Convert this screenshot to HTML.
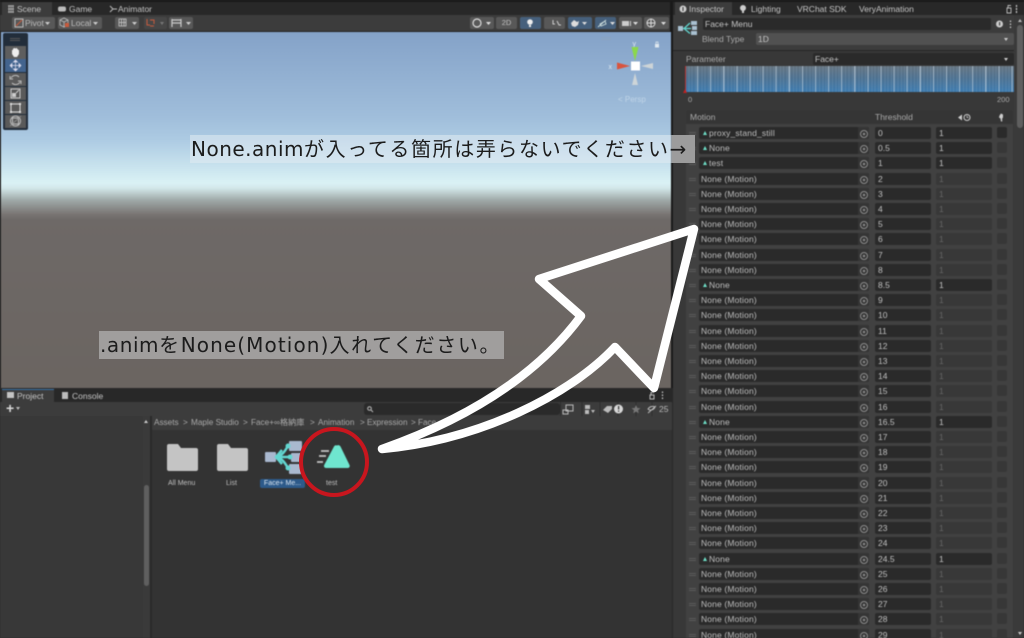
<!DOCTYPE html>
<html lang="ja"><head><meta charset="utf-8"><title>Unity</title>
<style>
*{box-sizing:border-box}
html,body{margin:0;padding:0;width:1024px;height:638px;overflow:hidden;background:#282828}
body{position:relative;font-family:"Liberation Sans","Noto Sans CJK JP",sans-serif;font-size:8.5px;color:#c4c4c4}
#ui{position:absolute;left:0;top:0;width:1024px;height:638px;filter:blur(.45px)}
.a{position:absolute;white-space:nowrap}
.btn{position:absolute;background:#585858;border-radius:2px;height:12px;top:17px}
.blue{background:#46607c}
.r{position:absolute;left:686px;width:327px;height:15px}
.r i{position:absolute;display:block;font-style:normal;top:0;height:12px;line-height:12px;border-radius:2px}
.h{left:3px;width:7px;height:3px!important;top:5px!important;border-top:1px solid #5a5a5a;border-bottom:1px solid #5a5a5a;border-radius:0!important}
.m{left:13px;width:170px;background:#2a2a2a;padding-left:2px;color:#bdbdbd;letter-spacing:.15px}
.c{left:172px;width:11px;background:#353535;border-radius:0 2px 2px 0!important}
.c:after{content:"";position:absolute;left:2px;top:3px;width:6px;height:6px;border:1px solid #8c8c8c;border-radius:50%;background:radial-gradient(#8c8c8c 1px,transparent 1.4px)}
.t{left:189px;width:56px;background:#2a2a2a;padding-left:3px;color:#c0c0c0}
.w{left:250px;width:56px;background:#383838;padding-left:3px;color:#666}
.on{background:#2a2a2a;color:#c4c4c4}
.k{left:311px;width:10px;height:11px!important;background:#373737}
.s{position:relative;padding-left:10px}
.s:before{content:"";position:absolute;left:4px;top:4px;border-left:2.5px solid transparent;border-right:2.5px solid transparent;border-bottom:4px solid #6fe0c8}
.lbl{position:absolute;font-family:"DejaVu Sans","Noto Sans CJK JP",sans-serif;color:#1c1c1c;white-space:nowrap;font-size:20px;line-height:26px;letter-spacing:1.6px}
.bc{position:absolute;top:417px;line-height:12px;color:#aaa;font-size:8.2px;white-space:nowrap}
</style></head><body>
<div id="ui">
<!-- top tab bar left -->
<div class="a" style="left:0;top:0;width:672px;height:2px;background:#191919"></div>
<div class="a" style="left:0;top:2px;width:672px;height:13px;background:#282828"></div>
<div class="a" style="left:2px;top:2px;width:50px;height:13px;background:#3c3c3c"></div>
<div class="a" style="left:17px;top:3px;line-height:12px">Scene</div>
<div class="a" style="left:69px;top:3px;line-height:12px">Game</div>
<div class="a" style="left:118px;top:3px;line-height:12px">Animator</div>
<svg class="a" style="left:7px;top:4px" width="125" height="10" viewBox="0 0 125 10"><path d="M1 2h6M1 5h6M1 8h6M2 1v8M4 1v8M6 1v8" stroke="#bbb" stroke-width=".8" fill="none"/><rect x="51" y="2.5" width="8" height="5" rx="2" fill="#bbb"/><path d="M103 2l3 3-3 3M106 5h4" stroke="#bbb" fill="none"/></svg>
<div class="a" style="left:0;top:15px;width:672px;height:17px;background:#3c3c3c"></div>
<div class="a" style="left:0;top:31px;width:672px;height:1px;background:#232323"></div>
<div class="btn" style="left:12px;width:43px"></div>
<div class="btn" style="left:58px;width:44px"></div>
<div class="btn" style="left:115px;width:24px"></div>
<div class="btn" style="left:144px;width:23px;background:#464646"></div>
<div class="btn" style="left:169px;width:24px"></div>
<div class="a" style="left:25px;top:17px;line-height:12px;color:#bcbcbc">Pivot</div>
<div class="a" style="left:71px;top:17px;line-height:12px;color:#bcbcbc">Local</div>
<svg class="a" style="left:0;top:15px" width="200" height="16" viewBox="0 0 200 16">
<g fill="#ccc"><path d="M45 7h5l-2.500 3zM93 7h5l-2.500 3zM132 7h5l-2.500 3zM186 7h5l-2.500 3z"/><path d="M160 7h4l-2 3z" fill="#777"/></g>
<rect x="15" y="4" width="8" height="8" fill="none" stroke="#bbb"/><path d="M16 11l6-6" stroke="#c85a3c"/>
<path d="M60 5l4-2 4 2v5l-4 2-4-2zM60 5l4 2 4-2M64 7v5" fill="none" stroke="#bbb" stroke-width=".8"/><rect x="65" y="8" width="4" height="4" fill="#c85a3c"/>
<path d="M119 4h7v7h-7zM121.500 4v7M124 4v7M119 7.500h7" stroke="#ccc" stroke-width=".8" fill="none"/>
<path d="M147 4v6h3M150 5h4v4M150 11h4" stroke="#c85a3c" stroke-width="1" fill="none"/>
<path d="M172 4v8M181 4v8M172 8h9M172 5h9" stroke="#ccc" stroke-width="1.200" fill="none"/>
</svg>
<!-- right scene toolbar -->
<div class="btn" style="left:470px;width:24px"></div>
<div class="btn" style="left:496px;width:21px;text-align:center;line-height:12px;color:#c4c4c4;font-size:7.500px">2D</div>
<div class="btn blue" style="left:520px;width:21px"></div>
<div class="btn" style="left:544px;width:21px"></div>
<div class="btn blue" style="left:568px;width:24px"></div>
<div class="btn blue" style="left:595px;width:21px"></div>
<div class="btn" style="left:619px;width:23px"></div>
<div class="btn" style="left:644px;width:25px"></div>
<svg class="a" style="left:470px;top:17px" width="202" height="12" viewBox="0 0 202 12">
<circle cx="7" cy="6" r="4" fill="none" stroke="#ddd" stroke-width="1.200"/><path d="M16 5h5l-2.500 3zM140 5h5l-2.500 3zM163 5h5l-2.500 3zM191 5h5l-2.500 3zM112 5h5l-2.500 3z" fill="#ddd"/>
<circle cx="60" cy="5" r="2.800" fill="#eee"/><rect x="59" y="8" width="2" height="2" fill="#eee"/>
<path d="M83 3v4h2M87 4l2 4h2" stroke="#ccc" fill="none"/>
<path d="M101 6l3-3 3 2 2-1-1 4-3 2-3-1z" fill="#ddd"/>
<path d="M130 7l5-3 1 3-5 2zM128 10l8-7" fill="none" stroke="#cdd" stroke-width=".9"/>
<rect x="152" y="4" width="7" height="5" fill="#ccc"/><rect x="160" y="4" width="1" height="5" fill="#ccc"/>
<circle cx="181" cy="6" r="4" fill="none" stroke="#ddd"/><path d="M177 6h8M181 2v8" stroke="#ddd"/>
</svg>
<div class="a" style="left:670px;top:0;width:3px;height:388px;background:#191919"></div>
<!-- Scene -->
<div class="a" style="left:0;top:32px;width:671px;height:356px;background:linear-gradient(180deg,#84a2c8 0,#a0bedb 85px,#adcbe3 108px,#daf2f5 151px,#d3e8ea 156px,#a0aaa9 168px,#7a7674 182px,#6e6967 188px,#6b6561 356px)"></div>
<div class="a" style="left:0;top:32px;width:1px;height:356px;background:#222"></div>
<!-- tools -->
<div class="a" style="left:3px;top:33px;width:25px;height:97px;background:#222d3a;border-radius:2px"></div>
<div class="a" style="left:10px;top:38px;width:10px;height:3px;border-top:1px solid #555;border-bottom:1px solid #555"></div>
<div class="a" style="left:5px;top:46px;width:21px;height:13px;background:#5e5e5e"></div>
<div class="a" style="left:5px;top:59px;width:21px;height:13px;background:#43648e"></div>
<div class="a" style="left:5px;top:73px;width:21px;height:13px;background:#5a5a5a"></div>
<div class="a" style="left:5px;top:87px;width:21px;height:13px;background:#5a5a5a"></div>
<div class="a" style="left:5px;top:101px;width:21px;height:13px;background:#5a5a5a"></div>
<div class="a" style="left:5px;top:115px;width:21px;height:13px;background:#5a5a5a"></div>
<svg class="a" style="left:5px;top:46px" width="21" height="82" viewBox="0 0 21 82">
<path d="M7 8V4l1 0V2.500h1V2h1v.5h1V2h1v1h1v1h1v4l-2 3H9z" fill="#eee"/>
<path d="M10.500 15v9M6 19.500h9M10.500 14l-2 2h4zM10.500 25l-2-2h4zM5 19.500l2-2v4zM16 19.500l-2-2v4z" fill="#dde" stroke="#dde" stroke-width=".7"/>
<path d="M14 31a5 5 0 0 0-8 1M7 37a5 5 0 0 0 8-1M5 30v3h3M16 38v-3h-3" fill="none" stroke="#bbb"/>
<rect x="6" y="43" width="9" height="9" fill="none" stroke="#ccc"/><rect x="7" y="47" width="4" height="4" fill="#ccc"/><path d="M11 47l3-3" stroke="#ccc"/>
<rect x="6" y="58" width="9" height="8" fill="none" stroke="#ddd"/><path d="M5 57h2v2H5zM14 57h2v2h-2zM5 65h2v2H5zM14 65h2v2h-2z" fill="#ddd"/>
<circle cx="10.500" cy="75" r="5" fill="none" stroke="#bbb"/><rect x="7.500" y="72" width="6" height="6" fill="none" stroke="#bbb"/><path d="M5 80l11-10" stroke="#999" stroke-width=".7"/>
</svg>
<!-- gizmo -->
<svg class="a" style="left:600px;top:36px" width="70" height="70" viewBox="0 0 70 70">
<path d="M1 1.500h10M1 3.500h10" stroke="#8fa3bc" stroke-width=".8"/>
<text x="32.500" y="10" font-size="7" fill="#dfe8f0" font-family="Liberation Sans">y</text>
<text x="8.500" y="33" font-size="7" fill="#dfe8f0" font-family="Liberation Sans">x</text>
<path d="M31.500 11h7l-3.500 14z" fill="#8bd84a"/><path d="M17 26.500l13 3.500-13 3.500z" fill="#d9543e"/>
<path d="M41 30l12-3v6zM35 37l-3 12h6z" fill="#d8dad8" opacity=".85"/>
<rect x="31" y="25.500" width="9" height="9" fill="#fff"/>
<rect x="55" y="8" width="4" height="3.500" fill="#dfe8f0"/><path d="M56 8V6h2v2" stroke="#dfe8f0" fill="none" stroke-width=".7"/>
</svg>
<div class="a" style="left:618px;top:95px;color:#cfe0ee;opacity:.7;font-size:8px">&lt; Persp</div>
<!-- project -->
<div class="a" style="left:0;top:388px;width:672px;height:250px;background:#383838"></div>
<div class="a" style="left:0;top:388px;width:672px;height:14px;background:#282828"></div>
<div class="a" style="left:2px;top:389px;width:52px;height:13px;background:#3c3c3c;border-top:1px solid #3a72a8"></div>
<div class="a" style="left:7px;top:392px;width:7px;height:6px;background:#c4c4c4"></div>
<div class="a" style="left:17px;top:390px;line-height:12px">Project</div>
<div class="a" style="left:62px;top:392px;width:6px;height:7px;background:#bbb"></div>
<div class="a" style="left:72px;top:390px;line-height:12px">Console</div>
<div class="a" style="left:0;top:402px;width:672px;height:14px;background:#3c3c3c"></div>
<div class="a" style="left:6px;top:401px;font-size:14px;line-height:15px;color:#d8d8d8;font-weight:bold">+</div>
<div class="a" style="left:16px;top:407px;border-left:2.500px solid transparent;border-right:2.500px solid transparent;border-top:3px solid #bbb"></div>
<div class="a" style="left:364px;top:403px;width:196px;height:12px;background:#2a2a2a;border-radius:3px"></div>
<svg class="a" style="left:366px;top:405px" width="8" height="8" viewBox="0 0 8 8"><circle cx="3.500" cy="3.500" r="1.800" fill="none" stroke="#bbb"/><path d="M5 5l2 2" stroke="#bbb"/></svg>
<svg class="a" style="left:560px;top:402px" width="112" height="14" viewBox="0 0 112 14">
<path d="M.5 0v14M22 0v14M40 0v14M58 0v14M76 0v14M92 0v14" stroke="#2e2e2e"/>
<rect x="6" y="3" width="7" height="6" fill="none" stroke="#bbb"/><rect x="3" y="8" width="5" height="4" fill="none" stroke="#bbb"/>
<path d="M25 3h5v4h-5zM25 8h4v4h-4zM31 8h4l-2 3z" fill="#bbb"/>
<path d="M43 8l4-4h5v3l-4 4z" fill="#bbb"/>
<circle cx="58.500" cy="7" r="4.500" fill="#d8d8d8"/><rect x="58" y="4" width="1.200" height="3.500" fill="#333"/><rect x="58" y="8.500" width="1.200" height="1.200" fill="#333"/>
<path d="M76 3l1.300 3 3.200.2-2.500 2 .8 3.100L76 9.600l-2.800 1.700.8-3.100-2.500-2 3.200-.2z" fill="#777"/>
<path d="M88 7c2-3 5-3 7-2-1 3-5 4-7 2zM88 11l8-7" stroke="#bbb" fill="none"/>
</svg>
<div class="a" style="left:659px;top:403px;line-height:12px;font-size:8.500px;color:#bbb">25</div>
<svg class="a" style="left:648px;top:390px" width="20" height="10" viewBox="0 0 20 10"><path d="M2 5h4v4H2zM3 5V2.500h3" fill="none" stroke="#bbb"/><path d="M14.500 1.500v1.500M14.500 4.500V6M14.500 7.500V9" stroke="#ccc" stroke-width="1.200"/></svg>
<div class="a" style="left:152px;top:416px;width:520px;height:14px;background:#3c3c3c"></div>
<div class="a" style="left:152px;top:430px;width:520px;height:208px;background:#333"></div>
<div class="a" style="left:150px;top:416px;width:2px;height:222px;background:#2a2a2a"></div>
<div class="a" style="left:143px;top:416px;width:7px;height:222px;background:#3a3a3a"></div>
<div class="a" style="left:144px;top:485px;width:5px;height:101px;background:#5f5f5f;border-radius:3px"></div>
<div class="a" style="left:144px;top:420px;border-left:2.500px solid transparent;border-right:2.500px solid transparent;border-bottom:3px solid #ccc"></div>
<div class="bc" style="left:154px">Assets</div><div class="bc" style="left:183px">&gt;</div>
<div class="bc" style="left:191px">Maple Studio</div><div class="bc" style="left:243px">&gt;</div>
<div class="bc" style="left:251px">Face+∞格納庫</div><div class="bc" style="left:310px">&gt;</div>
<div class="bc" style="left:318px">Animation</div><div class="bc" style="left:360px">&gt;</div>
<div class="bc" style="left:367px">Expression</div><div class="bc" style="left:411px">&gt;</div>
<div class="bc" style="left:418px">Face</div>
<svg class="a" style="left:160px;top:438px" width="200" height="50" viewBox="160 438 200 50">
<path d="M167 446a2 2 0 0 1 2-2h9l3 4h15a2 2 0 0 1 2 2v19a2 2 0 0 1-2 2h-27a2 2 0 0 1-2-2z" fill="#c4c4c4"/>
<path d="M217 446a2 2 0 0 1 2-2h9l3 4h15a2 2 0 0 1 2 2v19a2 2 0 0 1-2 2h-27a2 2 0 0 1-2-2z" fill="#c4c4c4"/>
<rect x="265" y="452" width="11" height="10" rx="1" fill="#a9b8cf"/>
<rect x="289" y="441" width="13" height="10" rx="1" fill="#a9b8cf"/><rect x="291" y="453" width="11" height="9" rx="1" fill="#a9b8cf"/><rect x="289" y="464" width="13" height="10" rx="1" fill="#a9b8cf"/>
<path d="M276 457c6-1 9-6 12-11M276 457h14M276 457c6 1 9 6 12 11" fill="none" stroke="#62d6d0" stroke-width="2.500"/><path d="M282 450l-6 7 6 7" fill="none" stroke="#62d6d0" stroke-width="2.500"/>
<circle cx="288" cy="446" r="2.500" fill="#62d6d0"/><circle cx="290" cy="457" r="2.500" fill="#62d6d0"/><circle cx="288" cy="468" r="2.500" fill="#62d6d0"/>
<path d="M337 445.500a2.500 2.500 0 0 1 3.500 1l9 18.500a2 2 0 0 1-2 3h-21.500a2 2 0 0 1-1.800-3l9.800-18.500a2.500 2.500 0 0 1 3-1z" fill="#6fe6cf"/>
<path d="M321 451h8M319 456h7M317 462h6" stroke="#c4c4c4" stroke-width="1.800"/>
</svg>
<div class="a" style="left:168px;top:479px;font-size:7px;line-height:10px;color:#c0c0c0">All Menu</div>
<div class="a" style="left:226px;top:479px;font-size:7px;line-height:10px;color:#c0c0c0">List</div>
<div class="a" style="left:260px;top:479px;width:45px;height:9px;background:#2d5a8a;border-radius:2px;font-size:7px;line-height:9px;color:#d8e4f0;text-align:center">Face+ Me...</div>
<div class="a" style="left:326px;top:479px;font-size:7px;line-height:10px;color:#c0c0c0">test</div>
<!-- inspector -->
<div class="a" style="left:673px;top:0;width:351px;height:638px;background:#383838"></div>
<div class="a" style="left:673px;top:0;width:351px;height:2px;background:#191919"></div>
<div class="a" style="left:673px;top:2px;width:351px;height:13px;background:#282828"></div>
<div class="a" style="left:675px;top:2px;width:57px;height:13px;background:#3c3c3c"></div>
<div class="a" style="left:689px;top:3px;line-height:12px">Inspector</div>
<div class="a" style="left:751px;top:3px;line-height:12px">Lighting</div>
<div class="a" style="left:797px;top:3px;line-height:12px">VRChat SDK</div>
<div class="a" style="left:859px;top:3px;line-height:12px">VeryAnimation</div>
<svg class="a" style="left:678px;top:4px" width="340" height="10" viewBox="0 0 340 10"><circle cx="5" cy="5" r="3.500" fill="#ccc"/><rect x="4.500" y="3" width="1" height="4" fill="#333"/><circle cx="65" cy="4" r="3" fill="#ccc"/><rect x="64" y="6.500" width="2" height="2.500" fill="#ccc"/><path d="M329 4h4v5h-4zM330 4V1.500h3" stroke="#bbb" fill="none" stroke-width=".9"/><path d="M338.500 1v2M338.500 4v2M338.500 7v2" stroke="#ccc" stroke-width="1.200"/></svg>
<div class="a" style="left:673px;top:15px;width:345px;height:36px;background:#3c3c3c"></div>
<div class="a" style="left:673px;top:50px;width:345px;height:1px;background:#262626"></div>
<svg class="a" style="left:678px;top:20px" width="20" height="16" viewBox="0 0 20 16"><rect x="0" y="6" width="5" height="5" fill="#a9c0d0"/><rect x="13" y="1" width="6" height="4" fill="#a9c0d0"/><rect x="14" y="6" width="5" height="4" fill="#a9c0d0"/><rect x="13" y="11" width="6" height="4" fill="#a9c0d0"/><path d="M12 3L6 8.500l6 5M5 8.500h8" fill="none" stroke="#62d6d0" stroke-width="1.300"/></svg>
<div class="a" style="left:703px;top:18px;width:288px;height:12px;background:#2a2a2a;border-radius:2px;line-height:12px;padding-left:2px">Face+ Menu</div>
<svg class="a" style="left:995px;top:19px" width="26" height="10" viewBox="0 0 26 10"><circle cx="4.500" cy="5" r="3.500" fill="#ccc"/><rect x="4" y="3" width="1.200" height="3.500" fill="#444"/><path d="M15.500 1.500v1.500M15.500 4.500V6M15.500 7.500V9" stroke="#ccc" stroke-width="1.200"/></svg>
<div class="a" style="left:702px;top:33px;line-height:12px;color:#aaa">Blend Type</div>
<div class="a" style="left:756px;top:33px;width:258px;height:12px;background:#515151;border-radius:2px;line-height:12px;padding-left:2px">1D</div>
<div class="a" style="left:1004px;top:38px;border-left:2.500px solid transparent;border-right:2.500px solid transparent;border-top:3px solid #ccc"></div>
<div class="a" style="left:686px;top:53px;line-height:12px;color:#aaa">Parameter</div>
<div class="a" style="left:813px;top:53px;width:201px;height:12px;background:#2a2a2a;border-radius:2px;line-height:12px;padding-left:2px">Face+</div>
<div class="a" style="left:1004px;top:58px;border-left:2.500px solid transparent;border-right:2.500px solid transparent;border-top:3px solid #ccc"></div>
<div class="a" style="left:685px;top:66px;width:329px;height:26px;background:repeating-linear-gradient(90deg,transparent 0,transparent 12px,rgba(205,220,232,.55) 12px,rgba(205,220,232,.55) 13.100px),repeating-linear-gradient(90deg,rgba(150,180,205,.2) 0,rgba(150,180,205,.2) 1px,transparent 1px,transparent 3.270px),linear-gradient(180deg,#667480 0,#4e7190 45%,#3e7cb0 100%)"></div>
<div class="a" style="left:685px;top:66px;width:1px;height:26px;background:#b03030"></div>
<div class="a" style="left:683px;top:89px;border-left:2.500px solid transparent;border-right:2.500px solid transparent;border-bottom:4px solid #c02020"></div>
<div class="a" style="left:688px;top:95px;line-height:10px;font-size:7.500px;color:#aaa">0</div>
<div class="a" style="left:997px;top:95px;line-height:10px;font-size:7.500px;color:#aaa">200</div>
<div class="a" style="left:686px;top:110px;width:327px;height:14px;background:#353535;border-radius:3px 3px 0 0"></div>
<div class="a" style="left:686px;top:124px;width:327px;height:514px;background:#414141"></div>
<div class="a" style="left:690px;top:111px;line-height:12px;color:#aaa">Motion</div>
<div class="a" style="left:875px;top:111px;line-height:12px;color:#aaa">Threshold</div>
<svg class="a" style="left:957px;top:112px" width="50" height="11" viewBox="0 0 50 11"><path d="M1 5.500L5 2.500v6z" fill="#ccc"/><circle cx="10" cy="5.500" r="3" fill="none" stroke="#ccc"/><path d="M10 3.500v2h1.500" stroke="#ccc" stroke-width=".7" fill="none"/><path d="M44 1.500l2 1v3l-.8 1v3H44l-.5-3-1.500-1 .5-2z" fill="#ccc"/></svg>
<!-- rows -->
<div class="r" style="top:127px"><i class="h"></i><i class="m s">proxy_stand_still</i><i class="c"></i><i class="t">0</i><i class="w on">1</i><i class="k" style="background:#2a2a2a"></i></div>
<div class="r" style="top:142.200px"><i class="h"></i><i class="m s">None</i><i class="c"></i><i class="t">0.5</i><i class="w on">1</i><i class="k"></i></div>
<div class="r" style="top:157.400px"><i class="h"></i><i class="m s">test</i><i class="c"></i><i class="t">1</i><i class="w on">1</i><i class="k"></i></div>
<div class="r" style="top:172.600px"><i class="h"></i><i class="m">None (Motion)</i><i class="c"></i><i class="t">2</i><i class="w">1</i><i class="k"></i></div>
<div class="r" style="top:187.800px"><i class="h"></i><i class="m">None (Motion)</i><i class="c"></i><i class="t">3</i><i class="w">1</i><i class="k"></i></div>
<div class="r" style="top:203px"><i class="h"></i><i class="m">None (Motion)</i><i class="c"></i><i class="t">4</i><i class="w">1</i><i class="k"></i></div>
<div class="r" style="top:218.200px"><i class="h"></i><i class="m">None (Motion)</i><i class="c"></i><i class="t">5</i><i class="w">1</i><i class="k"></i></div>
<div class="r" style="top:233.400px"><i class="h"></i><i class="m">None (Motion)</i><i class="c"></i><i class="t">6</i><i class="w">1</i><i class="k"></i></div>
<div class="r" style="top:248.600px"><i class="h"></i><i class="m">None (Motion)</i><i class="c"></i><i class="t">7</i><i class="w">1</i><i class="k"></i></div>
<div class="r" style="top:263.800px"><i class="h"></i><i class="m">None (Motion)</i><i class="c"></i><i class="t">8</i><i class="w">1</i><i class="k"></i></div>
<div class="r" style="top:279px"><i class="h"></i><i class="m s">None</i><i class="c"></i><i class="t">8.5</i><i class="w on">1</i><i class="k"></i></div>
<div class="r" style="top:294.200px"><i class="h"></i><i class="m">None (Motion)</i><i class="c"></i><i class="t">9</i><i class="w">1</i><i class="k"></i></div>
<div class="r" style="top:309.400px"><i class="h"></i><i class="m">None (Motion)</i><i class="c"></i><i class="t">10</i><i class="w">1</i><i class="k"></i></div>
<div class="r" style="top:324.600px"><i class="h"></i><i class="m">None (Motion)</i><i class="c"></i><i class="t">11</i><i class="w">1</i><i class="k"></i></div>
<div class="r" style="top:339.800px"><i class="h"></i><i class="m">None (Motion)</i><i class="c"></i><i class="t">12</i><i class="w">1</i><i class="k"></i></div>
<div class="r" style="top:355px"><i class="h"></i><i class="m">None (Motion)</i><i class="c"></i><i class="t">13</i><i class="w">1</i><i class="k"></i></div>
<div class="r" style="top:370.200px"><i class="h"></i><i class="m">None (Motion)</i><i class="c"></i><i class="t">14</i><i class="w">1</i><i class="k"></i></div>
<div class="r" style="top:385.400px"><i class="h"></i><i class="m">None (Motion)</i><i class="c"></i><i class="t">15</i><i class="w">1</i><i class="k"></i></div>
<div class="r" style="top:400.600px"><i class="h"></i><i class="m">None (Motion)</i><i class="c"></i><i class="t">16</i><i class="w">1</i><i class="k"></i></div>
<div class="r" style="top:415.800px"><i class="h"></i><i class="m s">None</i><i class="c"></i><i class="t">16.5</i><i class="w on">1</i><i class="k"></i></div>
<div class="r" style="top:431px"><i class="h"></i><i class="m">None (Motion)</i><i class="c"></i><i class="t">17</i><i class="w">1</i><i class="k"></i></div>
<div class="r" style="top:446.200px"><i class="h"></i><i class="m">None (Motion)</i><i class="c"></i><i class="t">18</i><i class="w">1</i><i class="k"></i></div>
<div class="r" style="top:461.400px"><i class="h"></i><i class="m">None (Motion)</i><i class="c"></i><i class="t">19</i><i class="w">1</i><i class="k"></i></div>
<div class="r" style="top:476.600px"><i class="h"></i><i class="m">None (Motion)</i><i class="c"></i><i class="t">20</i><i class="w">1</i><i class="k"></i></div>
<div class="r" style="top:491.800px"><i class="h"></i><i class="m">None (Motion)</i><i class="c"></i><i class="t">21</i><i class="w">1</i><i class="k"></i></div>
<div class="r" style="top:507px"><i class="h"></i><i class="m">None (Motion)</i><i class="c"></i><i class="t">22</i><i class="w">1</i><i class="k"></i></div>
<div class="r" style="top:522.200px"><i class="h"></i><i class="m">None (Motion)</i><i class="c"></i><i class="t">23</i><i class="w">1</i><i class="k"></i></div>
<div class="r" style="top:537.400px"><i class="h"></i><i class="m">None (Motion)</i><i class="c"></i><i class="t">24</i><i class="w">1</i><i class="k"></i></div>
<div class="r" style="top:552.600px"><i class="h"></i><i class="m s">None</i><i class="c"></i><i class="t">24.5</i><i class="w on">1</i><i class="k"></i></div>
<div class="r" style="top:567.800px"><i class="h"></i><i class="m">None (Motion)</i><i class="c"></i><i class="t">25</i><i class="w">1</i><i class="k"></i></div>
<div class="r" style="top:583px"><i class="h"></i><i class="m">None (Motion)</i><i class="c"></i><i class="t">26</i><i class="w">1</i><i class="k"></i></div>
<div class="r" style="top:598.200px"><i class="h"></i><i class="m">None (Motion)</i><i class="c"></i><i class="t">27</i><i class="w">1</i><i class="k"></i></div>
<div class="r" style="top:613.400px"><i class="h"></i><i class="m">None (Motion)</i><i class="c"></i><i class="t">28</i><i class="w">1</i><i class="k"></i></div>
<div class="r" style="top:628.600px"><i class="h"></i><i class="m">None (Motion)</i><i class="c"></i><i class="t">29</i><i class="w">1</i><i class="k"></i></div>
<!-- inspector scrollbar -->
<div class="a" style="left:1014px;top:15px;width:10px;height:623px;background:#3a3a3a"></div>
<div class="a" style="left:1017px;top:25px;width:6px;height:103px;background:#5f5f5f;border-radius:3px"></div>
<div class="a" style="left:1018px;top:19px;border-left:2.500px solid transparent;border-right:2.500px solid transparent;border-bottom:3px solid #bbb"></div>
<div class="a" style="left:1018px;top:632px;border-left:2.500px solid transparent;border-right:2.500px solid transparent;border-top:3px solid #ccc"></div>
</div>
<!-- overlays -->
<div class="a" style="left:190px;top:135px;width:482px;height:28px;background:rgba(225,235,242,.55)"></div>
<div class="a" style="left:672px;top:135px;width:23px;height:28px;background:#9c9c9c"></div>
<div class="lbl" style="left:191px;top:136px"><span style="letter-spacing:.5px">None.anim</span>が入ってる箇所は弄らないでください→</div>
<div class="a" style="left:99px;top:331px;width:405px;height:28px;background:#a09e9d"></div>
<div class="lbl" style="left:100px;top:332px"><span style="letter-spacing:.55px">.anim</span>を<span style="letter-spacing:1.1px">None(Motion)</span>入れてください。</div>
<svg class="a" style="left:0;top:0" width="1024" height="638" viewBox="0 0 1024 638">
<circle cx="334" cy="462" r="33" fill="none" stroke="#c8161e" stroke-width="4"/>
<path d="M382 449C450 425 530 385 581 316L539 279L694 229L654 388L615 347C570 395 480 440 382 449Z" fill="none" stroke="#fff" stroke-width="8.500" stroke-linejoin="round" stroke-linecap="round"/>
</svg>
</body></html>
